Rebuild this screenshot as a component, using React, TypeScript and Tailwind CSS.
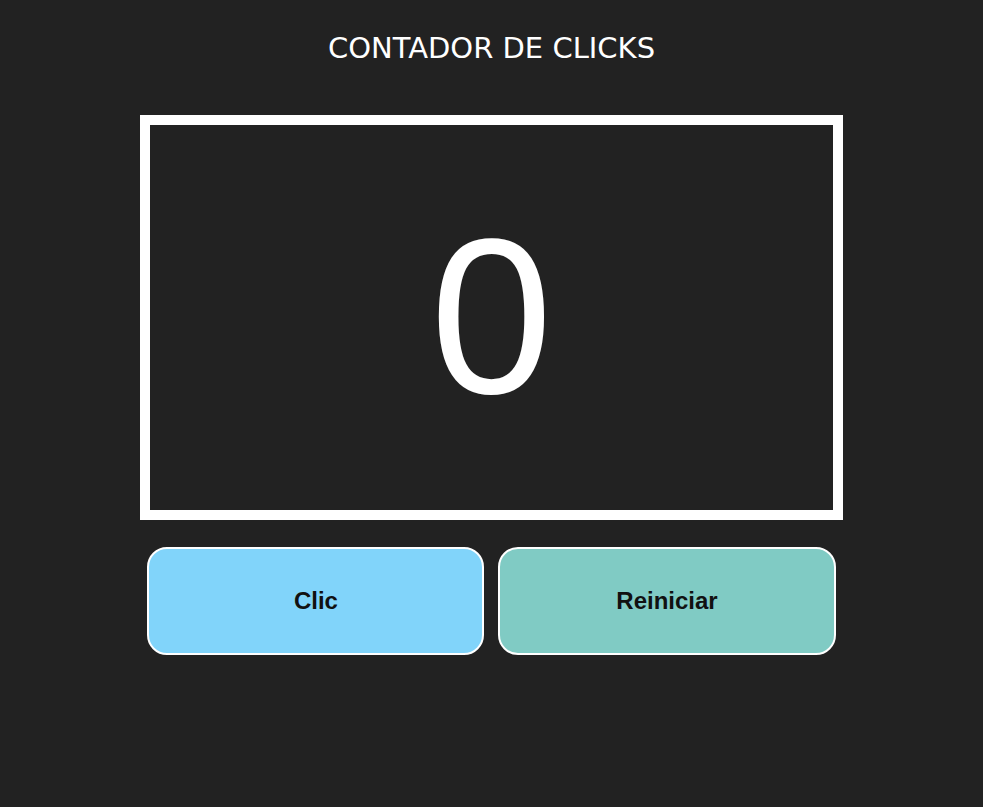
import { useState } from "react";

export default function App() {
  const [count, setCount] = useState(0);

  return (
    <main className="flex min-h-screen flex-col items-center bg-[#222222] pt-8 text-white">
      <h1 className="text-center font-['DejaVu_Sans',sans-serif] text-[29px] leading-8">CONTADOR DE CLICKS</h1>

      <div className="mt-[51px] w-5/7">
        <output
          aria-live="polite"
          className="flex items-center justify-center border-10 border-white py-[62px] font-['Liberation_Sans',Arial,sans-serif] text-[220px] leading-[261px]"
        >
          {count}
        </output>

        <div className="mt-[27px] grid grid-cols-2 gap-[14px] px-[7px] font-['Liberation_Sans',Arial,sans-serif] text-2xl font-bold text-[#111111]">
          <button
            type="button"
            onClick={() => setCount(count + 1)}
            className="h-[108px] cursor-pointer rounded-[20px] border-2 border-white bg-[#81d4fa]"
          >
            Clic
          </button>
          <button
            type="button"
            onClick={() => setCount(0)}
            className="h-[108px] cursor-pointer rounded-[20px] border-2 border-white bg-[#80cbc4]"
          >
            Reiniciar
          </button>
        </div>
      </div>
    </main>
  );
}
